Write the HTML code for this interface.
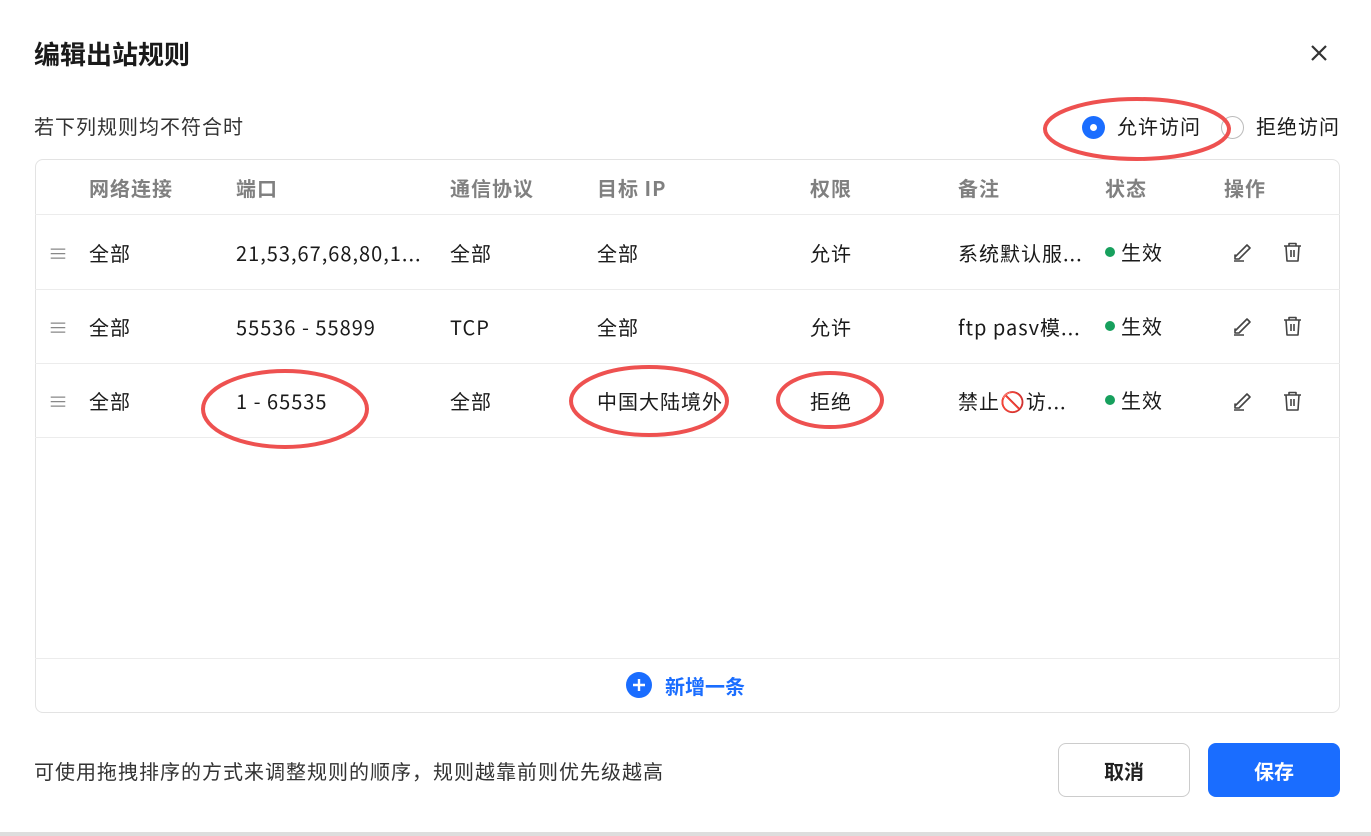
<!DOCTYPE html>
<html><head><meta charset="utf-8"><style>
*{margin:0;padding:0;box-sizing:border-box}
body{width:1371px;height:836px;background:#fff;font-family:"Noto Sans CJK SC","Liberation Sans",sans-serif;color:#1a1a1a;position:relative;overflow:hidden}
.a{position:absolute;white-space:nowrap;line-height:1}
.title{left:34px;top:41px;font-size:26px;font-weight:bold}
.box{position:absolute;left:35px;top:159px;width:1305px;height:554px;border:1px solid #e3e3e3;border-radius:8px}
.hl{position:absolute;left:35px;width:1305px;height:1px;background:#ececec}
.th{font-size:20px;font-weight:bold;color:#808080;top:178px;letter-spacing:1px}
.td{font-size:20px;letter-spacing:1px}
.dot{display:inline-block;width:10px;height:10px;border-radius:50%;background:#17a05d;margin-right:6px;vertical-align:3px}
.btn{position:absolute;top:743px;height:54px;width:132px;border-radius:8px;font-size:20px;font-weight:bold;display:flex;align-items:center;justify-content:center}
</style></head><body>
<div class="a title">编辑出站规则</div>
<svg class="a" style="left:1309px;top:43px" width="20" height="20"><path d="M3 3L17 17M17 3L3 17" stroke="#333" stroke-width="2.2"/></svg>
<div class="a" style="left:34px;top:116px;font-size:20px;color:#333;letter-spacing:1px">若下列规则均不符合时</div>
<div class="a" style="left:1082px;top:116px;width:23px;height:23px;border-radius:50%;background:#1a6dff"><div style="position:absolute;left:8px;top:8px;width:7px;height:7px;border-radius:50%;background:#fff"></div></div>
<div class="a" style="left:1117px;top:116px;font-size:20px;letter-spacing:1px">允许访问</div>
<div class="a" style="left:1221px;top:116px;width:23px;height:23px;border-radius:50%;border:1px solid #bbb"></div>
<div class="a" style="left:1256px;top:116px;font-size:20px;letter-spacing:1px">拒绝访问</div>
<div class="box"></div>
<div class="hl" style="top:214px"></div><div class="hl" style="top:289px"></div><div class="hl" style="top:363px"></div><div class="hl" style="top:437px"></div><div class="hl" style="top:658px"></div>
<div class="a th" style="left:89px">网络连接</div><div class="a th" style="left:236px">端口</div><div class="a th" style="left:450px">通信协议</div><div class="a th" style="left:597px">目标 IP</div><div class="a th" style="left:810px">权限</div><div class="a th" style="left:958px">备注</div><div class="a th" style="left:1105px">状态</div><div class="a th" style="left:1224px">操作</div>

<div class="a td" style="left:48px;top:243px;color:#888">≡</div>
<div class="a td" style="left:89px;top:243px">全部</div><div class="a td" style="left:236px;top:243px">21,53,67,68,80,1...</div><div class="a td" style="left:450px;top:243px">全部</div><div class="a td" style="left:597px;top:243px">全部</div><div class="a td" style="left:810px;top:243px">允许</div><div class="a td" style="left:958px;top:243px">系统默认服...</div><div class="a td" style="left:1105px;top:242px"><span class="dot"></span>生效</div>
<div class="a td" style="left:48px;top:317px;color:#888">≡</div>
<div class="a td" style="left:89px;top:317px">全部</div><div class="a td" style="left:236px;top:317px">55536 - 55899</div><div class="a td" style="left:450px;top:317px">TCP</div><div class="a td" style="left:597px;top:317px">全部</div><div class="a td" style="left:810px;top:317px">允许</div><div class="a td" style="left:958px;top:317px">ftp pasv模...</div><div class="a td" style="left:1105px;top:316px"><span class="dot"></span>生效</div>
<div class="a td" style="left:48px;top:391px;color:#888">≡</div>
<div class="a td" style="left:89px;top:391px">全部</div><div class="a td" style="left:236px;top:391px">1 - 65535</div><div class="a td" style="left:450px;top:391px">全部</div><div class="a td" style="left:597px;top:391px">中国大陆境外</div><div class="a td" style="left:810px;top:391px">拒绝</div><div class="a td" style="left:958px;top:391px">禁止🚫访...</div><div class="a td" style="left:1105px;top:390px"><span class="dot"></span>生效</div>

<svg class="a" style="left:0;top:0" width="1371" height="836">
<defs>
<g id="ic"><path d="M1 19h10M3 14L14 3l3 3L6 17H2v-4z" fill="none" stroke="#444" stroke-width="1.6" stroke-linejoin="round"/>
<g transform="translate(50,0)"><path d="M1 4h17M6 4V1.5h7V4M3 4l1 15h11l1-15M8 8v7M11 8v7" fill="none" stroke="#444" stroke-width="1.6" stroke-linejoin="round"/></g></g>
</defs>
<use href="#ic" x="1233" y="242"/><use href="#ic" x="1233" y="316"/><use href="#ic" x="1233" y="391"/>
<g fill="none" stroke="#ee5150" stroke-width="4">
<ellipse cx="1137" cy="129" rx="92" ry="30"/>
<ellipse cx="285" cy="409" rx="82" ry="38"/>
<ellipse cx="649" cy="401" rx="78" ry="34"/>
<ellipse cx="830" cy="400" rx="52" ry="27"/>
</g>
<circle cx="639" cy="685" r="13" fill="#1a6dff"/><path d="M633 685h12M639 679v12" stroke="#fff" stroke-width="2.4"/>
</svg>
<div class="a" style="left:665px;top:676px;font-size:20px;font-weight:bold;color:#1a6dff">新增一条</div>
<div class="a" style="left:34px;top:761px;font-size:20px;color:#333;letter-spacing:1px">可使用拖拽排序的方式来调整规则的顺序，规则越靠前则优先级越高</div>
<div class="btn" style="left:1058px;border:1px solid #ccc;color:#222">取消</div>
<div class="btn" style="left:1208px;background:#1a6dff;color:#fff">保存</div>
<div class="a" style="left:0;top:832px;width:1371px;height:4px;background:#ddd"></div>
</body></html>
